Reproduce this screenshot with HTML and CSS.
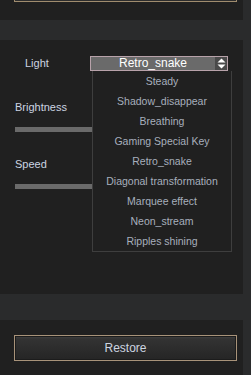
FILE: index.html
```html
<!DOCTYPE html>
<html lang="en">
<head>
  <meta charset="UTF-8" />
  <meta name="viewport" content="width=device-width, initial-scale=1.0" />
  <title>Light Settings</title>
  <link rel="stylesheet" href="styles.css">
</head>
<body>
  <div class="panel top">
    <div class="top-button"></div>
  </div>

  <div class="panel main">
    <div class="row light-row">
      <span class="label light-label">Light</span>
      <div class="select">
        <span class="select-value">Retro_snake</span>
        <span class="select-arrows">
          <svg width="9" height="11" viewBox="0 0 9 11">
            <path d="M4.5 0.5 L8.5 4.5 L0.5 4.5 Z" fill="#fff"/>
            <path d="M0.5 6.5 L8.5 6.5 L4.5 10.5 Z" fill="#fff"/>
          </svg>
        </span>
      </div>
    </div>

    <div class="setting">
      <span class="label">Brightness</span>
      <div class="slider"></div>
    </div>

    <div class="setting">
      <span class="label">Speed</span>
      <div class="slider"></div>
    </div>

    <ul class="dropdown">
      <li>Steady</li>
      <li>Shadow_disappear</li>
      <li>Breathing</li>
      <li>Gaming Special Key</li>
      <li>Retro_snake</li>
      <li>Diagonal transformation</li>
      <li>Marquee effect</li>
      <li>Neon_stream</li>
      <li>Ripples shining</li>
    </ul>
  </div>

  <div class="panel bottom">
    <button class="restore">Restore</button>
  </div>
</body>
</html>
```

FILE: styles.css
```css
html, body {
  margin: 0;
  padding: 0;
}

body {
  width: 251px;
  height: 375px;
  overflow: hidden;
  background: #2a2b2c;
  font-family: 'Liberation Sans', Arial, sans-serif;
  font-size: 11px;
}

.panel {
  width: 243px;
  background: #202020;
}

.top {
  height: 20px;
}

.top-button {
  margin: 0 14px 0 14px;
  width: 221px;
  height: 1px;
  background: #2c2c2c;
  border: 1px solid #a08c6e;
  border-top: none;
}

.main {
  position: relative;
  margin-top: 20px;
  height: 254px;
  padding-top: 16px;
  box-sizing: border-box;
}

.row {
  display: flex;
  align-items: center;
}

.light-row {
  padding-left: 25px;
  height: 15px;
}

.light-label {
  width: 65px;
}

.label {
  color: #ccd4e2;
  line-height: 15px;
}

.select {
  display: flex;
  width: 138px;
  height: 15px;
  box-sizing: border-box;
  border: 1px solid #b8a2aa;
  background: #6a6a6a;
}

.select-value {
  flex: 1;
  text-align: center;
  color: #fff;
  font-size: 12px;
  line-height: 13px;
}

.select-arrows {
  width: 12px;
  background: #4a4a4a;
  display: flex;
  align-items: center;
  justify-content: center;
}

.select-arrows svg {
  display: block;
}

.setting {
  padding-left: 15px;
  margin-top: 29px;
}

.setting .label {
  display: block;
  margin-bottom: 12px;
}

.setting + .setting {
  margin-top: 25px;
}

.slider {
  width: 213px;
  height: 5px;
  background: #6a6a6a;
}

.dropdown {
  position: absolute;
  left: 92px;
  top: 31px;
  width: 140px;
  box-sizing: border-box;
  margin: 0;
  padding: 0;
  list-style: none;
  background: #202020;
  border: 1px solid #3e3e3e;
  border-top: none;
}

.dropdown li {
  height: 20px;
  line-height: 20px;
  text-align: center;
  color: #a7afbd;
  font-size: 10.5px;
  white-space: nowrap;
}

.bottom {
  margin-top: 26px;
  height: 55px;
  padding-top: 15px;
  box-sizing: border-box;
}

.restore {
  display: block;
  margin-left: 14px;
  width: 223px;
  height: 26px;
  border: 1px solid #a8937a;
  box-shadow: inset 0 0 0 1px #1c1c1c;
  background: linear-gradient(to bottom, #444 0%, #333 12%, #2c2c2c 55%, #252525 100%);
  color: #cdd5e0;
  font-family: 'Liberation Sans', Arial, sans-serif;
  font-size: 12px;
  padding: 0;
}
```
